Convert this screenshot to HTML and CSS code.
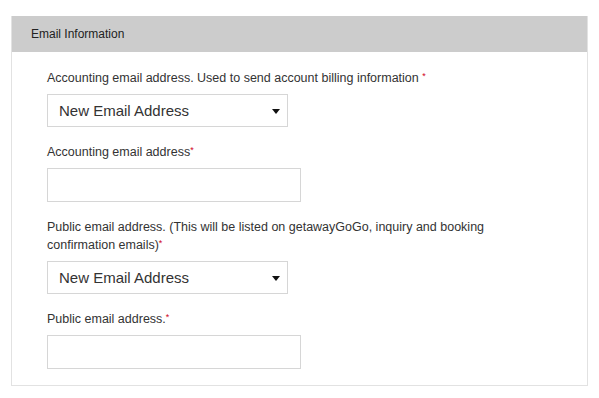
FILE: index.html
```html
<!doctype html>
<html lang="en">
<head>
    <meta charset="UTF-8">
    <title>Email Information</title>
    <link rel="stylesheet" href="styles.css">
</head>
<body>
<div class="panel">
    <div class="panel-head">Email Information</div>
    <div class="panel-body">
        <div class="group">
            <label class="label">Accounting email address. Used to send account billing information <span class="req">*</span></label>
            <div class="select-wrap">
                <select class="select">
                    <option>New Email Address</option>
                </select>
            </div>
        </div>
        <div class="group">
            <label class="label">Accounting email address<span class="req">*</span></label>
            <input class="input" type="text">
        </div>
        <div class="group">
            <label class="label">Public email address. (This will be listed on getawayGoGo, inquiry and booking confirmation emails)<span class="req">*</span></label>
            <div class="select-wrap">
                <select class="select">
                    <option>New Email Address</option>
                </select>
            </div>
        </div>
        <div class="group last">
            <label class="label">Public email address.<span class="req">*</span></label>
            <input class="input" type="text">
        </div>
    </div>
</div>
</body>
</html>
```

FILE: styles.css
```css
* { margin: 0; padding: 0; box-sizing: border-box; }
body { padding: 16px 11px 0 11px; background: #fff; font-family: "Liberation Sans", Arial, sans-serif; color: #333; }
.panel { width: 577px; border: 1px solid #e2e2e2; border-top: none; }
.panel-head { height: 36px; line-height: 36px; padding-left: 19px; background: #cccccc; font-size: 12px; color: #222; }
.panel-body { padding: 17px 35px 16px 35px; }
.group { margin-bottom: 16px; }
.group.last { margin-bottom: 0; }
.label { display: block; max-width: 470px; font-size: 12.5px; line-height: 18px; color: #333; margin-bottom: 7px; }
.req { position: relative; top: -3px; color: #d0021b; font-size: 9px; line-height: 0; }
.select-wrap { position: relative; width: 241px; }
.select-wrap::after { content: ""; position: absolute; right: 8px; top: 15px; border-left: 4px solid transparent; border-right: 4px solid transparent; border-top: 5px solid #111; pointer-events: none; }
.select { display: block; width: 241px; height: 33px; padding: 0 11px; border: 1px solid #d6d6d6; border-radius: 0; background: #fff; font-family: inherit; font-size: 15px; color: #333; appearance: none; -webkit-appearance: none; outline: none; }
.input { display: block; width: 254px; height: 34px; border: 1px solid #d6d6d6; border-radius: 0; background: #fff; outline: none; }
```
